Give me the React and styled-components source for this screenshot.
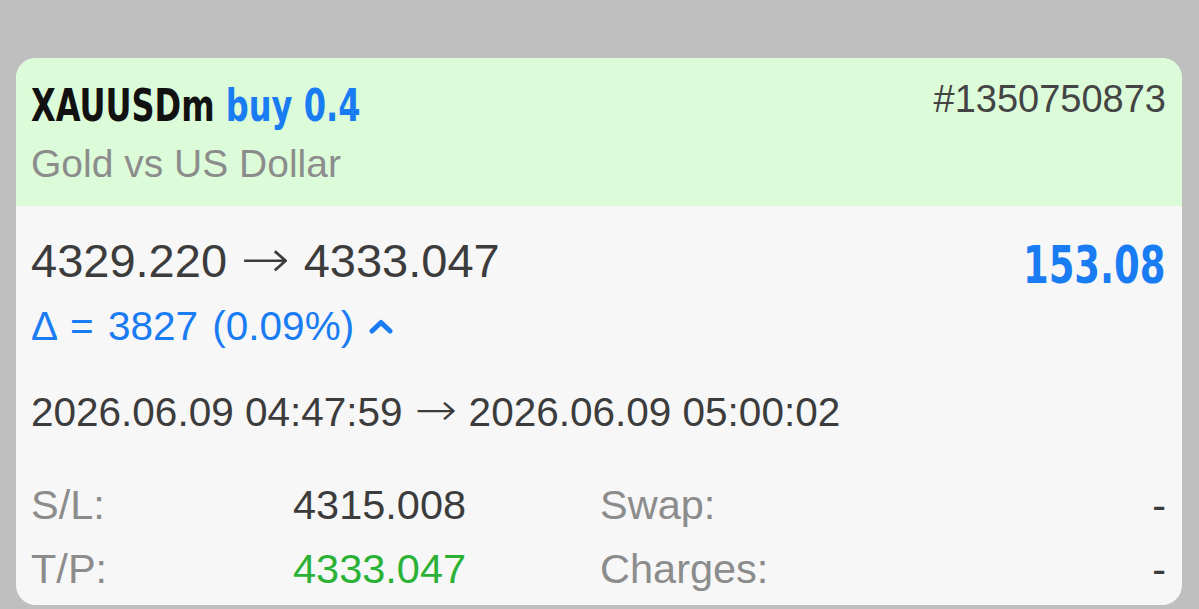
import React from 'react';
import styled, { createGlobalStyle } from 'styled-components';

const GlobalStyle = createGlobalStyle`
  html, body {
    margin: 0;
    padding: 0;
    background: #bfbfbf;
    font-family: "Liberation Sans", Arial, sans-serif;
  }
`;

const Page = styled.div`
  width: 1199px;
  height: 609px;
  box-sizing: border-box;
  padding: 58px 17px 4px 16px;
  overflow: hidden;
`;

const Card = styled.div`
  background: #f7f7f7;
  border-radius: 20px;
  overflow: hidden;
`;

const Header = styled.div`
  background: #dcfcd9;
  padding: 22px 16px 18px 15px;
  display: flex;
  justify-content: space-between;
  align-items: flex-start;
`;

// no narrow font installed, so squeeze the condensed face to the phone's width
const Narrow = styled.span`
  font-family: "DejaVu Sans Condensed", "Liberation Sans", sans-serif;
  font-weight: 700;
  display: inline-block;
  white-space: nowrap;
`;

const Title = styled(Narrow)`
  font-size: 44px;
  line-height: 52px;
  color: #111;
  transform: scaleX(0.81);
  transform-origin: left center;
`;

const Side = styled.span`
  color: #1a7cf2;
`;

const Sub = styled.div`
  margin-top: 8px;
  font-size: 39px;
  line-height: 48px;
  color: #8c8c8c;
`;

const Ticket = styled.div`
  font-size: 38px;
  line-height: 38px;
  color: #444;
`;

const Body = styled.div`
  padding: 28px 16px 4px 15px;
`;

const PriceRow = styled.div`
  display: flex;
  justify-content: space-between;
  align-items: flex-start;
`;

const Prices = styled.div`
  font-size: 47px;
  line-height: 54px;
  color: #3c3c3c;
  white-space: nowrap;
`;

const Arrow = styled.span`
  display: inline-block;
  width: 1.63em;
  text-align: center;
  font-family: "DejaVu Sans", sans-serif;
  font-weight: 200;
  line-height: 0;
  transform: scale(1.25, 1.1);
  position: relative;
  top: -0.04em;
`;

const Profit = styled(Narrow)`
  font-size: 52px;
  line-height: 62px;
  color: #1a7cf2;
  transform: scaleX(0.79);
  transform-origin: right center;
`;

const Delta = styled.div`
  margin-top: 14px;
  font-size: 40.5px;
  line-height: 48px;
  word-spacing: 3px;
  color: #1a7cf2;
  display: flex;
  align-items: center;
  gap: 15px;
`;

const Dates = styled.div`
  margin-top: 37px;
  font-size: 40.5px;
  line-height: 50px;
  color: #3c3c3c;
  white-space: nowrap;
`;

const Grid = styled.div`
  margin-top: 36px;
  display: grid;
  grid-template-columns: 262px 307px 1fr auto;
  font-size: 41.5px;
  line-height: 64px;
`;

const Label = styled.div`
  color: #8c8c8c;
`;

const Value = styled.div`
  color: ${p => (p.$green ? '#2bb236' : '#3c3c3c')};
  text-align: ${p => (p.$right ? 'right' : 'left')};
`;

const Chevron = () => (
  <svg width="24" height="16" viewBox="0 0 24 16">
    <path d="M3 13 L12 4.5 L21 13" fill="none" stroke="#1a7cf2" strokeWidth="5" strokeLinecap="round" strokeLinejoin="round" />
  </svg>
);

export default function App() {
  return (
    <>
      <GlobalStyle />
      <Page>
        <Card>
          <Header>
            <div>
              <Title>
                XAUUSDm <Side>buy 0.4</Side>
              </Title>
              <Sub>Gold vs US Dollar</Sub>
            </div>
            <Ticket>#1350750873</Ticket>
          </Header>
          <Body>
            <PriceRow>
              <div>
                <Prices>4329.220<Arrow>→</Arrow>4333.047</Prices>
                <Delta>
                  <span>Δ = 3827 (0.09%)</span>
                  <Chevron />
                </Delta>
              </div>
              <Profit>153.08</Profit>
            </PriceRow>
            <Dates>2026.06.09 04:47:59<Arrow>→</Arrow>2026.06.09 05:00:02</Dates>
            <Grid>
              <Label>S/L:</Label>
              <Value>4315.008</Value>
              <Label>Swap:</Label>
              <Value $right>-</Value>
              <Label>T/P:</Label>
              <Value $green>4333.047</Value>
              <Label>Charges:</Label>
              <Value $right>-</Value>
            </Grid>
          </Body>
        </Card>
      </Page>
    </>
  );
}
